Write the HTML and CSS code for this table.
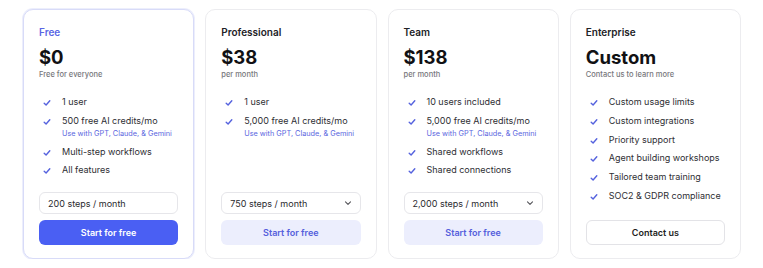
FILE: index.html
```html
<!DOCTYPE html>
<html>
<head>
<meta charset="utf-8">
<link rel="stylesheet" href="styles.css">
</head>
<body>
<div class="plans">
  <div class="card card-featured">
    <div class="plan-name plan-name-accent">Free</div>
    <div class="price">$0</div>
    <div class="sub">Free for everyone</div>
    <ul class="features">
      <li><span class="check"><svg viewBox="0 0 8 8"><path d="M1.2 4.2 L3.1 6 L6.8 1.8"/></svg></span>1 user</li>
      <li><span class="check"><svg viewBox="0 0 8 8"><path d="M1.2 4.2 L3.1 6 L6.8 1.8"/></svg></span><div>500 free AI credits/mo<div class="note">Use with GPT, Claude, &amp; Gemini</div></div></li>
      <li><span class="check"><svg viewBox="0 0 8 8"><path d="M1.2 4.2 L3.1 6 L6.8 1.8"/></svg></span>Multi-step workflows</li>
      <li><span class="check"><svg viewBox="0 0 8 8"><path d="M1.2 4.2 L3.1 6 L6.8 1.8"/></svg></span>All features</li>
    </ul>
    <div class="actions">
      <div class="select">200 steps / month</div>
      <button class="btn btn-primary">Start for free</button>
    </div>
  </div>

  <div class="card">
    <div class="plan-name">Professional</div>
    <div class="price">$38</div>
    <div class="sub">per month</div>
    <ul class="features">
      <li><span class="check"><svg viewBox="0 0 8 8"><path d="M1.2 4.2 L3.1 6 L6.8 1.8"/></svg></span>1 user</li>
      <li><span class="check"><svg viewBox="0 0 8 8"><path d="M1.2 4.2 L3.1 6 L6.8 1.8"/></svg></span><div>5,000 free AI credits/mo<div class="note">Use with GPT, Claude, &amp; Gemini</div></div></li>
    </ul>
    <div class="actions">
      <div class="select">750 steps / month<svg class="chev" viewBox="0 0 8 8"><path d="M1.5 2.8 L4 5.3 L6.5 2.8"/></svg></div>
      <button class="btn btn-soft">Start for free</button>
    </div>
  </div>

  <div class="card">
    <div class="plan-name">Team</div>
    <div class="price">$138</div>
    <div class="sub">per month</div>
    <ul class="features">
      <li><span class="check"><svg viewBox="0 0 8 8"><path d="M1.2 4.2 L3.1 6 L6.8 1.8"/></svg></span>10 users included</li>
      <li><span class="check"><svg viewBox="0 0 8 8"><path d="M1.2 4.2 L3.1 6 L6.8 1.8"/></svg></span><div>5,000 free AI credits/mo<div class="note">Use with GPT, Claude, &amp; Gemini</div></div></li>
      <li><span class="check"><svg viewBox="0 0 8 8"><path d="M1.2 4.2 L3.1 6 L6.8 1.8"/></svg></span>Shared workflows</li>
      <li><span class="check"><svg viewBox="0 0 8 8"><path d="M1.2 4.2 L3.1 6 L6.8 1.8"/></svg></span>Shared connections</li>
    </ul>
    <div class="actions">
      <div class="select">2,000 steps / month<svg class="chev" viewBox="0 0 8 8"><path d="M1.5 2.8 L4 5.3 L6.5 2.8"/></svg></div>
      <button class="btn btn-soft">Start for free</button>
    </div>
  </div>

  <div class="card">
    <div class="plan-name">Enterprise</div>
    <div class="price">Custom</div>
    <div class="sub">Contact us to learn more</div>
    <ul class="features">
      <li><span class="check"><svg viewBox="0 0 8 8"><path d="M1.2 4.2 L3.1 6 L6.8 1.8"/></svg></span>Custom usage limits</li>
      <li><span class="check"><svg viewBox="0 0 8 8"><path d="M1.2 4.2 L3.1 6 L6.8 1.8"/></svg></span>Custom integrations</li>
      <li><span class="check"><svg viewBox="0 0 8 8"><path d="M1.2 4.2 L3.1 6 L6.8 1.8"/></svg></span>Priority support</li>
      <li><span class="check"><svg viewBox="0 0 8 8"><path d="M1.2 4.2 L3.1 6 L6.8 1.8"/></svg></span>Agent building workshops</li>
      <li><span class="check"><svg viewBox="0 0 8 8"><path d="M1.2 4.2 L3.1 6 L6.8 1.8"/></svg></span>Tailored team training</li>
      <li><span class="check"><svg viewBox="0 0 8 8"><path d="M1.2 4.2 L3.1 6 L6.8 1.8"/></svg></span>SOC2 &amp; GDPR compliance</li>
    </ul>
    <div class="actions">
      <button class="btn btn-outline">Contact us</button>
    </div>
  </div>
</div>
</body>
</html>
```

FILE: styles.css
```css
* { box-sizing: border-box; }
html, body { margin: 0; padding: 0; background: #ffffff; }
body {
  font-family: Inter, "Noto Sans", sans-serif;
  color: #1e1e22;
}
.plans {
  display: grid;
  grid-template-columns: repeat(4, minmax(0, 1fr));
  gap: 11px;
  width: 718px;
  margin: 9px 0 0 23px;
}
.card {
  min-width: 0;
  height: 250px;
  border: 1px solid #ececef;
  border-radius: 10px;
  background: #fff;
  padding: 15px 15px 13px 15px;
  display: flex;
  flex-direction: column;
}
.card-featured {
  border-color: #d8dbf8;
  box-shadow: 0 0 0 1px #eceefc;
}
.plan-name {
  font-size: 10px;
  font-weight: 600;
  line-height: 14px;
  color: #222226;
}
.plan-name-accent { color: #5a66e4; }
.price {
  margin-top: 5px;
  font-size: 18.5px;
  font-weight: 700;
  line-height: 26px;
  color: #111114;
}
.sub {
  font-size: 7.5px;
  font-weight: 500;
  line-height: 10px;
  color: #77777c;
}
.features {
  list-style: none;
  margin: 15px 0 0 0;
  padding: 0;
  display: flex;
  flex-direction: column;
  gap: 4.8px;
}
.features li {
  display: flex;
  align-items: flex-start;
  font-size: 9px;
  line-height: 14px;
  color: #2e2e33;
  white-space: nowrap;
}
.check {
  flex: none;
  width: 8px;
  height: 8px;
  margin: 4px 11px 0 4px;
  display: flex;
}
.check svg {
  width: 8px;
  height: 8px;
  fill: none;
  stroke: #5562de;
  stroke-width: 1.4;
  stroke-linecap: round;
  stroke-linejoin: round;
}
.note {
  font-size: 7.3px;
  line-height: 12px;
  color: #5a66e0;
  white-space: nowrap;
}
.actions {
  margin-top: auto;
  display: flex;
  flex-direction: column;
  gap: 6px;
}
.select {
  height: 22px;
  border: 1px solid #e6e6ea;
  border-radius: 6px;
  padding: 0 8px;
  display: flex;
  align-items: center;
  justify-content: space-between;
  font-size: 9px;
  color: #2a2a2e;
}
.chev {
  width: 8px;
  height: 8px;
  fill: none;
  stroke: #55555a;
  stroke-width: 1.1;
  stroke-linecap: round;
  stroke-linejoin: round;
}
.btn {
  height: 25px;
  border-radius: 6px;
  border: 1px solid transparent;
  font-family: Inter, "Noto Sans", sans-serif;
  font-size: 9px;
  font-weight: 600;
  padding: 0;
}
.btn-primary {
  background: #4a5ff3;
  color: #ffffff;
}
.btn-soft {
  background: #eceefd;
  color: #5560dc;
}
.btn-outline {
  background: #ffffff;
  border-color: #e3e3e7;
  color: #1e1e22;
}
```
